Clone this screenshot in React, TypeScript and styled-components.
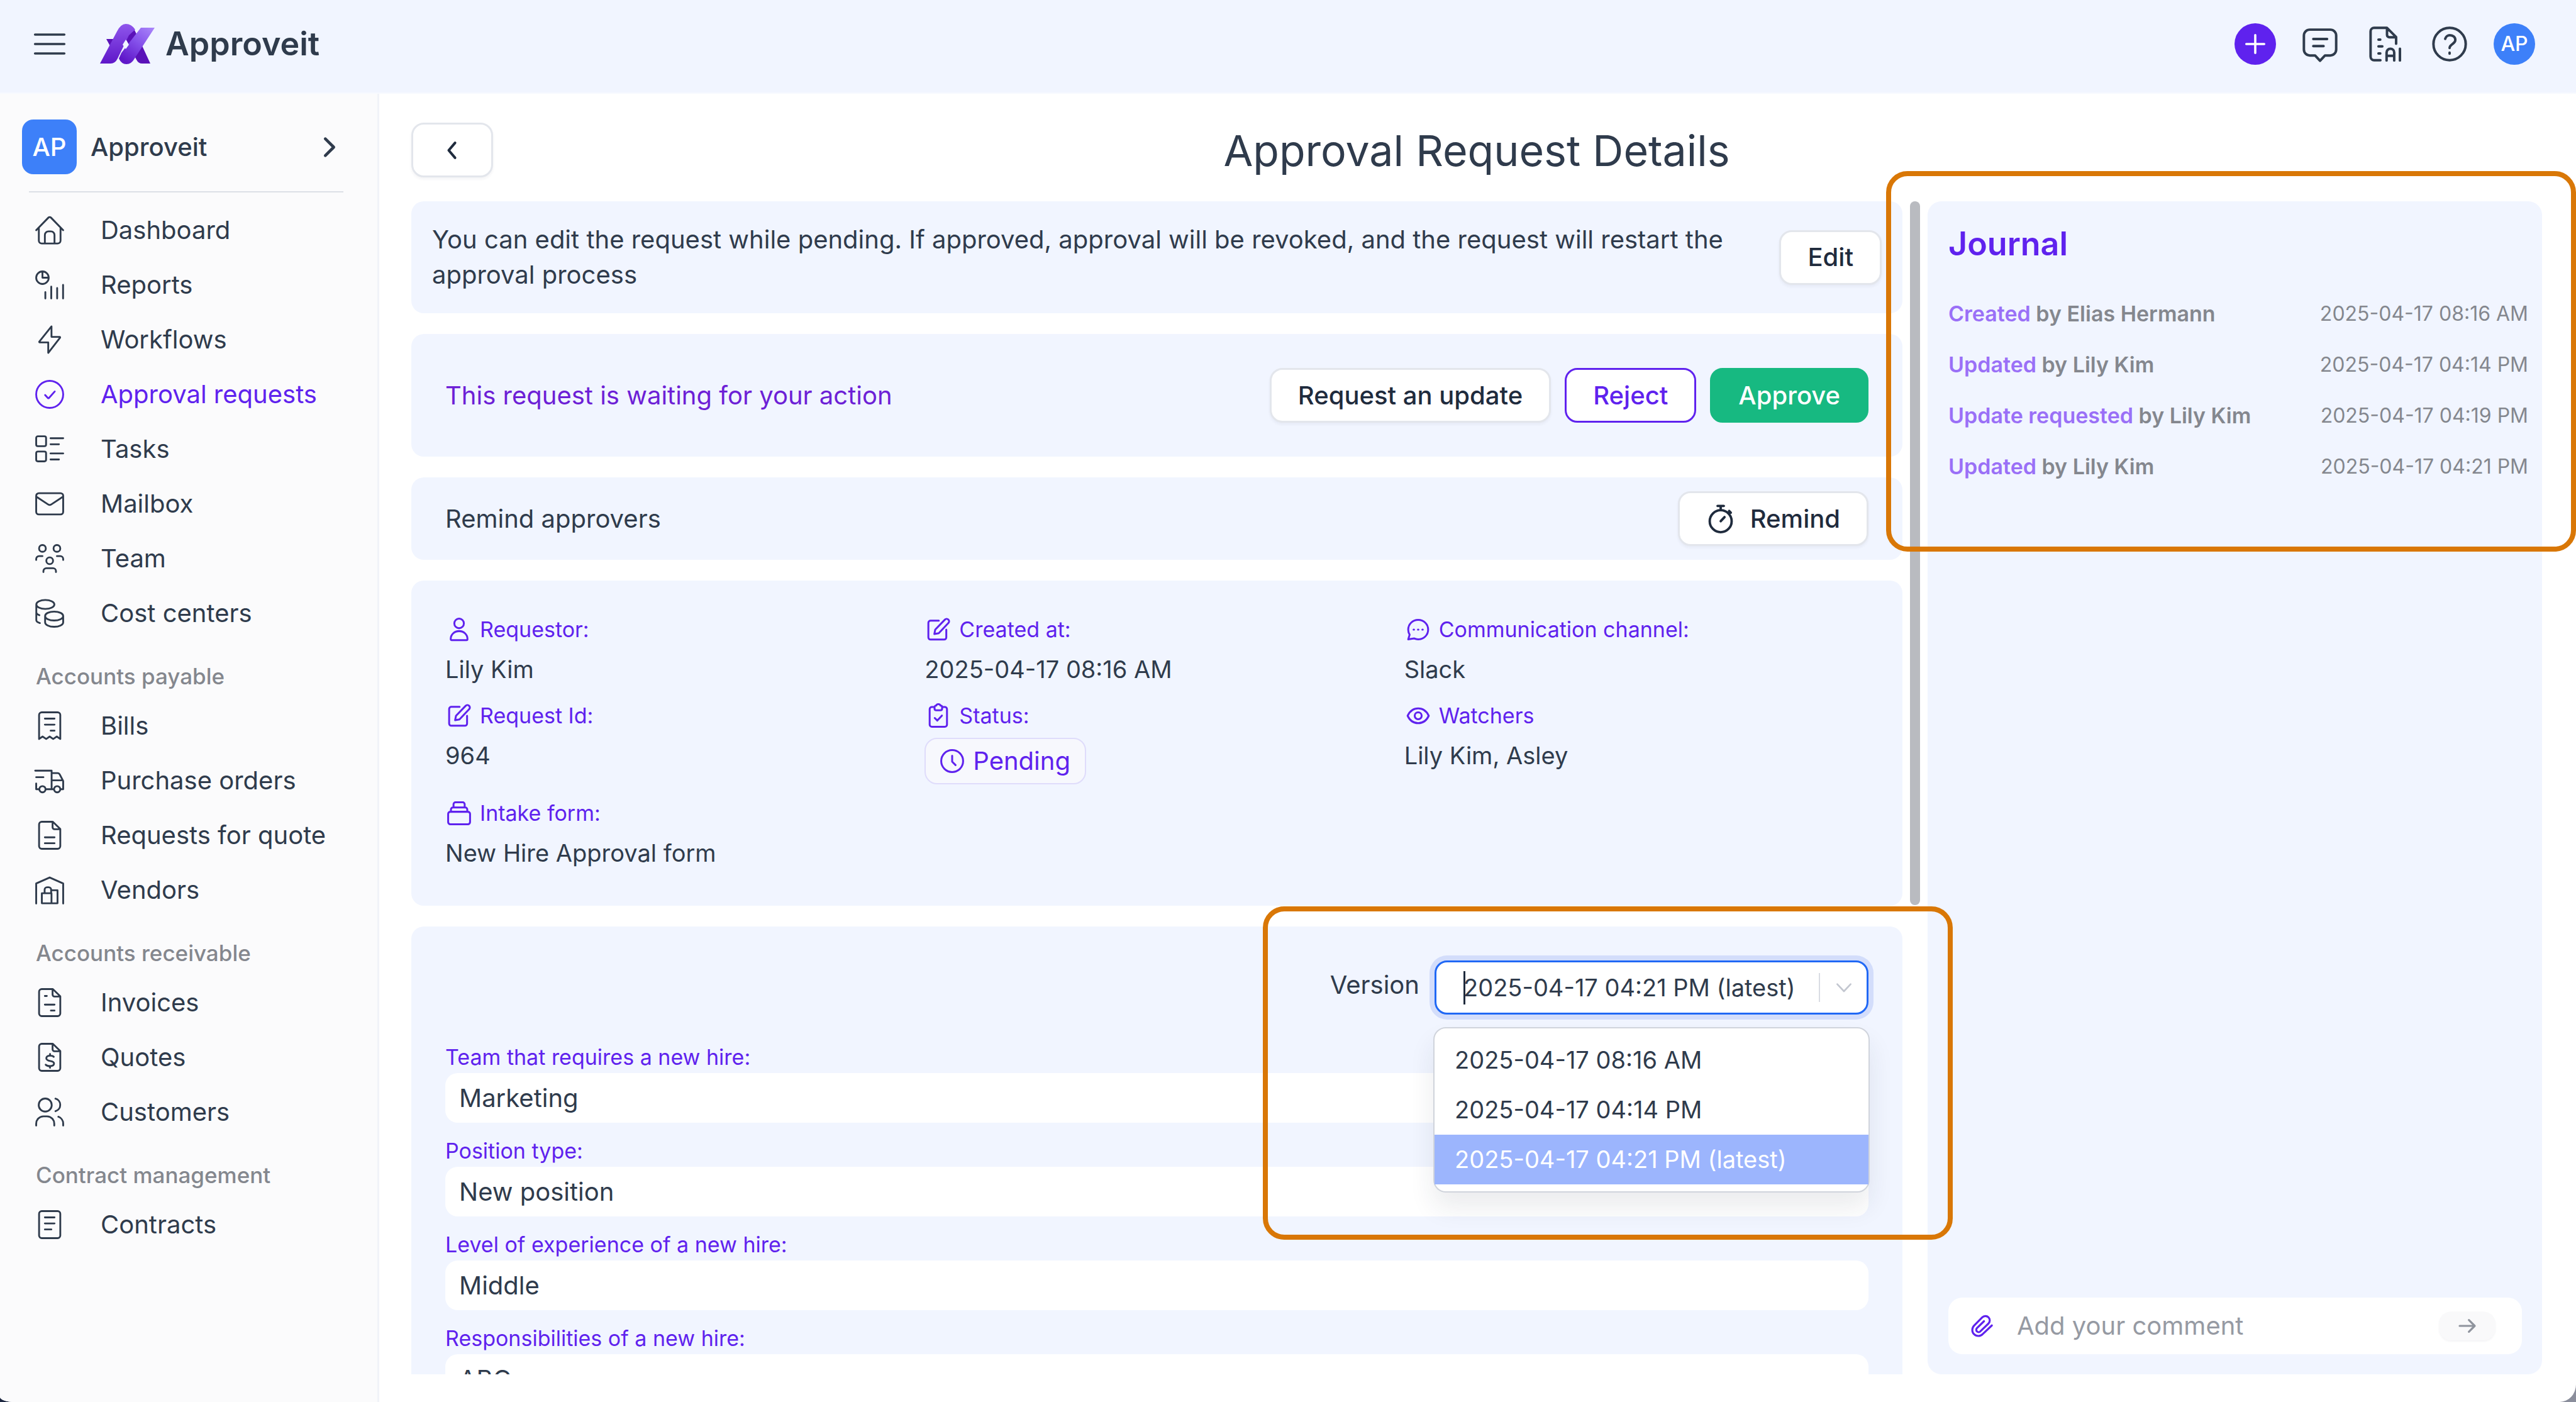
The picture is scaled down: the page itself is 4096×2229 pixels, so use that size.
import React from "react";
import styled, { createGlobalStyle, css } from "styled-components";

const color = {
  ink: "#2f3b4c",
  strong: "#1f2b3d",
  muted: "#84878e",
  purple: "#5f22ee",
  violet: "#6d1fd6",
  lilac: "#9a70f7",
  panel: "#f1f5ff",
  blue: "#3d80f9",
  green: "#17b981",
  orange: "#d97706",
};

const GlobalStyle = createGlobalStyle`
  *, *::before, *::after { box-sizing: border-box; }
  body {
    margin: 0;
    background: linear-gradient(to right, #1d2740 50%, #8b8e9c 50%);
    color: ${color.ink};
    font-family: Inter, "Noto Sans", sans-serif;
    font-optical-sizing: none;
    font-size: 40px;
    line-height: 56px;
  }
  button, input { font: inherit; color: inherit; }
  a { color: inherit; text-decoration: none; }
  h1, h2, h3, p, ul, dl, dd { margin: 0; padding: 0; }
  ul { list-style: none; }
`;

/* ---------- icons ---------- */

const FILE_OUTLINE =
  "M3.2 3A2.2 2.2 0 0 1 5.4.8h9.2l6.2 6V21a2.2 2.2 0 0 1-2.2 2.2H5.4A2.2 2.2 0 0 1 3.2 21ZM14.4 1v4.4A1.6 1.6 0 0 0 16 7h4.6";

const paths: Record<string, string> = {
  menu: "M.8 4.8h22.4M.8 12h22.4M.8 19.2h22.4",
  home: "M.8 12 11 1.5a1.4 1.4 0 0 1 2 0L23.2 12M3 10.2v10.4a2.4 2.4 0 0 0 2.4 2.4h13.2a2.4 2.4 0 0 0 2.4-2.4V10.2M8 23v-7a3 3 0 0 1 3-3h2a3 3 0 0 1 3 3v7",
  reports:
    "M6 .8a5.2 5.2 0 1 0 0 10.4A5.2 5.2 0 1 0 6 .8M6 .8V6h5.2M8.4 18v5.2M13.3 13.4v9.8M18.2 14.6v8.6M23.1 12v11.2",
  bolt: "M13.5 1 3.4 13.6c-.2.3 0 .7.3.7h7.1V23L20.6 10.4c.2-.3 0-.7-.3-.7h-6.8Z",
  approval: "M12 .8a11.2 11.2 0 1 0 0 22.4A11.2 11.2 0 1 0 12 .8M8.2 12.5l2.3 2.5a.6.6 0 0 0 .9 0L16.2 9.6",
  tasks:
    "M2.2 1.4h5.4A1.4 1.4 0 0 1 9 2.8v5.4a1.4 1.4 0 0 1-1.4 1.4H2.2A1.4 1.4 0 0 1 .8 8.2V2.8a1.4 1.4 0 0 1 1.4-1.4ZM2.2 14h5.4A1.4 1.4 0 0 1 9 15.4v5.4a1.4 1.4 0 0 1-1.4 1.4H2.2A1.4 1.4 0 0 1 .8 20.8v-5.4A1.4 1.4 0 0 1 2.2 14ZM12.7 3h10.5M12.7 8h7M12.7 15.6h10.5M12.7 20.6h7",
  mail: "M3 3.2h18A2.2 2.2 0 0 1 23.2 5.4v13.2A2.2 2.2 0 0 1 21 20.8H3A2.2 2.2 0 0 1 .8 18.6V5.4A2.2 2.2 0 0 1 3 3.2ZM1.4 6.4 11 12.7q1 .6 2 0l9.6-6.3",
  team: "M6 .8a2.8 2.8 0 1 0 0 5.6A2.8 2.8 0 1 0 6 .8M18 .8a2.8 2.8 0 1 0 0 5.6A2.8 2.8 0 1 0 18 .8M12 11a2.8 2.8 0 1 0 0 5.6A2.8 2.8 0 1 0 12 11M.8 13.2V12.4A2.4 2.4 0 0 1 3.2 10H6M23.2 13.2V12.4A2.4 2.4 0 0 0 20.8 10H18M6.8 23.2V22.4A2.4 2.4 0 0 1 9.2 20H14.8A2.4 2.4 0 0 1 17.2 22.4V23.2",
  coins:
    "M8.4 1c4.2 0 7.5 1.6 7.5 3.7S12.6 8.4 8.4 8.4.9 6.8.9 4.7 4.2 1 8.4 1ZM.9 4.7v13c0 .9 1 1.8 3 2.4M.9 11.2c0 .9 1 1.8 2.6 2.4M15.7 10.6c4.2 0 7.5 1.6 7.5 3.7S19.9 18 15.7 18s-7.5-1.6-7.5-3.7 3.3-3.7 7.5-3.7ZM8.2 14.3v5.2c0 2.1 3.3 3.7 7.5 3.7s7.5-1.6 7.5-3.7v-5.2",
  bill: "M3.2 22.9V3A2.2 2.2 0 0 1 5.4.8h13.2A2.2 2.2 0 0 1 20.8 3v19.9l-2.9-2-3 2-2.9-2-2.9 2-3-2-2.9 2ZM8 6h8M8 11h8M12.8 16H16",
  truck:
    "M0 3.8h13.6v15.4M13.6 5.8h4.9a2 2 0 0 1 1.8 1.1l2.9 5.5v6.8h-2.3M13.6 11.8h9.2M6 16.6a2.6 2.6 0 1 0 0 5.2 2.6 2.6 0 1 0 0-5.2M18.2 16.6a2.6 2.6 0 1 0 0 5.2 2.6 2.6 0 1 0 0-5.2M8.6 19.2h7M.8 14.4v4.8h2.6M.8 9.2h6",
  fileLines: FILE_OUTLINE + "M8 13.7h8M8 18.6h8",
  warehouse:
    "M.8 23.2V6.6L12 1.6l11.2 5v16.6M5.5 14.7h8v8.3h-8ZM13.5 12.2H18.5V23h-5M7.8 14.7v-3a2 2 0 0 1 2-2h1.4a2 2 0 0 1 2 2v3",
  fileBill: FILE_OUTLINE + "M8 6.5h1.6M8 13.7h8M13 18.6h3",
  fileDollar:
    FILE_OUTLINE +
    "M15.4 11.6c-.5-.6-1.5-1-3-1-1.8 0-3.2.7-3.2 2.2 0 3.2 6.4 1.4 6.4 4.3 0 1.5-1.5 2.2-3.4 2.2-1.6 0-2.9-.5-3.5-1.2M12.3 9.2v1.4M12.3 19.3v1.4",
  users:
    "M8.3.8a5.4 5.4 0 1 0 0 10.8A5.4 5.4 0 1 0 8.3.8M.8 23.2v-1.6a6 6 0 0 1 6-6h3a6 6 0 0 1 6 6v1.6M16.8.9a5.4 5.4 0 0 1 0 10.4M19.2 15.9a6 6 0 0 1 4 5.7v1.6",
  contract:
    "M5.4.8h13.2A2.2 2.2 0 0 1 20.8 3v18a2.2 2.2 0 0 1-2.2 2.2H5.4A2.2 2.2 0 0 1 3.2 21V3A2.2 2.2 0 0 1 5.4.8ZM8 6h8M8 11h8M8 16h5.4",
  chevronRight: "m9 5 7 7-7 7",
  chevronLeft: "m14.5 5.5-5.5 6.5 5.5 6.5",
  chevronDown: "m4 8 8 8.5L20 8",
  plus: "M12 2.5v19M2.5 12h19",
  comment:
    "M5 2.2h14a4 4 0 0 1 4 4v9.6a4 4 0 0 1-4 4h-3.6L12 23.4l-3.4-3.6H5a4 4 0 0 1-4-4V6.2a4 4 0 0 1 4-4ZM7.4 8.6h9.4M7.4 13.4h7",
  fileAi:
    "M9 23H4.7a2.4 2.4 0 0 1-2.4-2.4V3.4A2.4 2.4 0 0 1 4.7 1h8.8l6.2 6.2v4.6M13.5 1.2v4.6a1.6 1.6 0 0 0 1.6 1.6h4.4M7.7 9h1.2M7.7 13.6h2.6M7.7 18.4h1.2M13.2 23.2v-5.4a2.6 2.6 0 0 1 5.2 0v5.4M13.2 20h5.2M22.3 15.2v8",
  help: "M12 1a11 11 0 1 0 0 22A11 11 0 1 0 12 1M9 8.5A3.3 3.3 0 0 1 12.3 6c2 0 3.6 1.3 3.6 3.2 0 2.8-3.9 2.8-3.9 5.5M12 17.9v.6",
  person:
    "M12 1a4.8 4.8 0 1 0 0 9.6A4.8 4.8 0 1 0 12 1M3.6 21.4c0-4.4 3.6-7.9 8.4-7.9s8.4 3.5 8.4 7.9c0 .8-.3 1.2-1 1.2H4.6c-.7 0-1-.4-1-1.2Z",
  edit: "M12.5 3H4.2A2.2 2.2 0 0 0 2 5.2v14.6A2.2 2.2 0 0 0 4.2 22h13.6a2.2 2.2 0 0 0 2.2-2.2V12M18.6 2a2.4 2.4 0 0 1 3.5 3.4L12.4 15.6 8 16.4l.9-4.4Z",
  clipboard:
    "M8.2 3.2H5.5a2.2 2.2 0 0 0-2.2 2.2V20.8A2.2 2.2 0 0 0 5.5 23h13a2.2 2.2 0 0 0 2.2-2.2V5.4a2.2 2.2 0 0 0-2.2-2.2h-2.7M8.2 3.4A1.6 1.6 0 0 1 9.8 1.8 2.4 2.4 0 0 1 14.2 1.8 1.6 1.6 0 0 1 15.8 3.4V5A1.6 1.6 0 0 1 14.2 6.5H9.8A1.6 1.6 0 0 1 8.2 5ZM8.4 14.2l2.6 2.6 4.6-5",
  clock: "M12 1a11 11 0 1 0 0 22A11 11 0 1 0 12 1M12 6.6v6l3.4 3.4",
  chat: "M12 2.2c5.6 0 10 4.3 10 9.8s-4.4 9.8-10 9.8c-1.6 0-3-.4-4.2-1L2 21.8l1.4-4.7A9.4 9.4 0 0 1 2 12C2 6.5 6.4 2.2 12 2.2ZM7.4 12h.4M11.8 12h.4M16.2 12h.4",
  eye: "M1.4 12C3.6 7.2 7.5 4.6 12 4.6S20.4 7.2 22.6 12C20.4 16.8 16.5 19.4 12 19.4S3.6 16.8 1.4 12ZM12 8.5a3.5 3.5 0 1 0 0 7 3.5 3.5 0 1 0 0-7",
  stack:
    "M3.2 10.5h17.6A2.2 2.2 0 0 1 23 12.7v8A2.2 2.2 0 0 1 20.8 23H3.2A2.2 2.2 0 0 1 1 20.7v-8A2.2 2.2 0 0 1 3.2 10.5ZM3.8 10.3V8.2A2 2 0 0 1 5.8 6.2h12.4a2 2 0 0 1 2 2v2.1M6.4 6V3a2 2 0 0 1 2-2h7.2a2 2 0 0 1 2 2v3",
  clip: "m22.8 11.5-9.8 9.2a6.3 6.3 0 0 1-9.1.1 6.5 6.5 0 0 1 0-9.1L12.6 2.9a4.7 4.7 0 0 1 6.6 0 4.7 4.7 0 0 1 0 6.6l-8.6 8.3a2.5 2.5 0 0 1-3.7-3.4l7.6-7.4",
  stopwatch:
    "M12 4.8a9.1 9.1 0 1 0 0 18.2 9.1 9.1 0 1 0 0-18.2M9.4 1.2h5.2M12 1.4v3.2M19 5.4l1.4 1.4M12 13.9l3.2-3.4",
  arrow: "M3 12h18M14 5l7 7-7 7",
};

const Svg = styled.svg<{ $size: number }>`
  display: block;
  flex: none;
  width: ${(p) => p.$size}px;
  height: ${(p) => p.$size}px;
  overflow: visible;
  fill: none;
  stroke: currentColor;
  stroke-linecap: round;
  stroke-linejoin: round;
`;

function Icon({ name, size = 46, stroke = 1.5 }: { name: string; size?: number; stroke?: number }) {
  return (
    <Svg $size={size} viewBox="0 0 24 24" strokeWidth={stroke} aria-hidden="true">
      <path d={paths[name]} />
    </Svg>
  );
}

const LogoSvg = styled.svg`
  display: block;
  width: 88px;
  height: 64px;
`;

function Logo() {
  return (
    <LogoSvg viewBox="0 0 88 64" aria-hidden="true">
      <defs>
        <linearGradient id="leg" x1="0" y1="0" x2="0" y2="1">
          <stop offset="0" stopColor="#8f56ec" />
          <stop offset="1" stopColor="#5f17c9" />
        </linearGradient>
        <linearGradient id="arm" x1="1" y1="0" x2="0.3" y2="1">
          <stop offset="0" stopColor="#ab88fb" />
          <stop offset="0.5" stopColor="#8450ea" />
          <stop offset="1" stopColor="#5f17c9" />
        </linearGradient>
      </defs>
      <path d="M10 24H22L16 35Z" fill="#5a12b8" />
      <path d="M44 8H54L62 24 80 63H67Q61 63 58 57L40 22Z" fill="#5a12b8" />
      <path d="M0 63 27 12Q33 0 41 0 50 0 56 9L46 18 28 55Q24 63 17 63Z" fill="url(#leg)" />
      <path d="M65 6H87L55 55Q50 64 42 64 34 64 30 55L34 46Z" fill="url(#arm)" />
      <path d="M41 25 46 33 41 40 36 33Z" fill="#f1f5ff" />
    </LogoSvg>
  );
}

/* ---------- shell ---------- */

const Page = styled.div`
  position: relative;
  display: flex;
  flex-direction: column;
  height: 100vh;
  overflow: hidden;
  background: #fff;
  border-radius: 0 0 26px 24px / 0 0 28px 8px;
`;

const Header = styled.header`
  display: flex;
  align-items: center;
  justify-content: space-between;
  flex: none;
  padding: 37px 65px 44px 54px;
  background: ${color.panel};
  border-bottom: 2px solid #f7f9ff;
`;

const Brand = styled.div`
  display: flex;
  align-items: center;
  gap: 55px;
`;

const BrandLink = styled.a`
  display: flex;
  align-items: center;
  gap: 16px;
  font-size: 52px;
  font-weight: 600;
`;

const Tools = styled.div`
  display: flex;
  align-items: center;
  gap: 37px;
`;

const ToolButton = styled.button<{ $fill?: string }>`
  display: grid;
  place-items: center;
  width: 66px;
  height: 66px;
  padding: 0;
  border: 0;
  border-radius: 50%;
  background: ${(p) => p.$fill ?? "transparent"};
  color: ${(p) => (p.$fill ? "#fff" : color.ink)};
  font-size: 32px;
  font-weight: 500;
`;

const MenuButton = styled(ToolButton)`
  width: 50px;
`;

const Body = styled.div`
  display: grid;
  grid-template-columns: 603px minmax(0, 1fr);
  flex: 1;
  min-height: 0;
`;

/* ---------- sidebar ---------- */

const Sidebar = styled.nav`
  padding: 41px 54px 0 35px;
  background: #fbfbfc;
  border-right: 3px solid #f1f3f8;
`;

const Workspace = styled.button`
  display: flex;
  align-items: center;
  width: 100%;
  gap: 22px;
  padding: 0;
  border: 0;
  background: none;
  font-weight: 500;
`;

const WorkspaceName = styled.span`
  flex: 1;
  text-align: left;
`;

const WorkspaceBadge = styled.span`
  display: grid;
  place-items: center;
  width: 87px;
  height: 87px;
  border-radius: 18px;
  background: ${color.blue};
  color: #fff;
`;

const Rule = styled.hr`
  height: 2px;
  margin: 27px 0 16px 11px;
  border: 0;
  background: #dce0e6;
`;

const NavHeading = styled.h3`
  padding: 34px 0 12px 22px;
  color: ${color.muted};
  font-size: 35px;
  font-weight: 500;
  line-height: 46px;
`;

const NavLink = styled.a<{ $active?: boolean }>`
  display: flex;
  align-items: center;
  gap: 58px;
  height: 87px;
  padding-left: 21px;
  white-space: nowrap;
  color: ${(p) => (p.$active ? color.purple : color.ink)};
`;

/* ---------- main ---------- */

const Main = styled.main`
  display: flex;
  flex-direction: column;
  min-height: 0;
  padding: 46px 54px 44px 51px;
`;

const TitleBar = styled.div`
  display: grid;
  grid-template-columns: 1fr auto 1fr;
  align-items: center;
  margin-bottom: 38px;
`;

const Title = styled.h1`
  font-size: 68px;
  font-weight: 400;
  line-height: 80px;
`;

const buttonLook = {
  plain: css`
    border-color: #e3e6ec;
    background: #fff;
    color: ${color.strong};
    box-shadow: 0 3px 4px rgba(30, 40, 70, 0.05);
  `,
  outline: css`
    border-color: ${color.purple};
    background: #fff;
    color: ${color.purple};
  `,
  solid: css`
    border-color: ${color.green};
    background: ${color.green};
    color: #fff;
  `,
};

const Button = styled.button<{ $look?: keyof typeof buttonLook }>`
  display: flex;
  align-items: center;
  justify-content: center;
  gap: 24px;
  flex: none;
  height: 87px;
  padding: 0 42px;
  border: 3px solid;
  border-radius: 20px;
  font-weight: 500;
  white-space: nowrap;
  ${(p) => buttonLook[p.$look ?? "plain"]}
`;

const BackButton = styled(Button)`
  width: 130px;
  padding: 0;
`;

const Columns = styled.div`
  display: grid;
  grid-template-columns: minmax(0, 1fr) 16px 977px;
  column-gap: 12px;
  flex: 1;
  min-height: 0;
`;

const Scroller = styled.div`
  display: flex;
  flex-direction: column;
  gap: 33px;
  min-height: 0;
  overflow: hidden;
`;

const ScrollThumb = styled.div`
  height: 60%;
  border-radius: 8px;
  background: #b9bbc0;
`;

const Card = styled.section<{ $pad: string }>`
  flex: none;
  padding: ${(p) => p.$pad};
  border-radius: 20px;
  background: ${color.panel};
`;

const CardRow = styled(Card)`
  display: flex;
  align-items: center;
  justify-content: space-between;
  gap: 22px;
`;

const Notice = styled.p`
  max-width: 2120px;
`;

const Waiting = styled.p`
  color: ${color.violet};
`;

const Actions = styled.div`
  display: flex;
  gap: 22px;
`;

const Facts = styled.dl`
  display: grid;
  grid-template-columns: repeat(3, minmax(0, 1fr));
  gap: 20px 24px;
`;

const Fact = styled.div`
  display: flex;
  flex-direction: column;
  align-items: flex-start;
  gap: 9px;
`;

const FactLabel = styled.dt`
  display: flex;
  align-items: center;
  gap: 14px;
  padding-left: 3px;
  color: ${color.purple};
  font-size: 34px;
  line-height: 52px;
`;

const FactValue = styled.dd`
  font-size: 38px;
`;

const Badge = styled.span`
  display: flex;
  align-items: center;
  gap: 14px;
  height: 74px;
  padding: 0 23px;
  border: 2px solid #dfdcfb;
  border-radius: 20px;
  background: #f7f8fd;
  color: ${color.purple};
  font-size: 40px;
`;

const VersionRow = styled.div`
  display: flex;
  justify-content: flex-end;
  gap: 24px;
  margin-bottom: 45px;
`;

const VersionLabel = styled.label`
  line-height: 78px;
`;

const Combo = styled.div`
  position: relative;
  display: flex;
  align-items: center;
  width: 690px;
  height: 86px;
  padding: 0 20px 0 43px;
  border: 3px solid #2068f5;
  border-radius: 20px;
  background: #fff;
  box-shadow: 0 0 0 8px #d3ddfb;
  font-size: 38px;
`;

const ComboInput = styled.input`
  flex: 1;
  min-width: 0;
  padding: 0;
  border: 0;
  outline: 0;
  background: none;
`;

const Caret = styled.span`
  position: absolute;
  left: 43px;
  width: 3px;
  height: 53px;
  background: ${color.strong};
`;

const ComboToggle = styled.button`
  display: flex;
  align-items: center;
  height: 46px;
  padding: 0 0 0 22px;
  border: 0;
  border-left: 2px solid #d9dce3;
  background: none;
  color: #c3c7d0;
`;

const Menu = styled.ul`
  position: absolute;
  z-index: 1;
  top: 103px;
  left: -5px;
  right: -5px;
  padding: 11px 0;
  border: 2px solid #d0d4dc;
  border-radius: 20px;
  background: #fff;
  box-shadow: 0 24px 40px rgba(30, 40, 70, 0.09);
`;

const Option = styled.li<{ $selected: boolean }>`
  padding: 0 32px;
  line-height: 79px;
  background: ${(p) => (p.$selected ? "#9cb5fd" : "transparent")};
  color: ${(p) => (p.$selected ? "#fff" : "inherit")};
`;

const Field = styled.div`
  display: flex;
  flex-direction: column;
  gap: 2px;
  margin-bottom: 22px;
`;

const FieldLabel = styled.label`
  color: ${color.purple};
  font-size: 34px;
  line-height: 46px;
`;

const FieldInput = styled.input`
  height: 79px;
  padding: 0 22px;
  border: 0;
  border-radius: 20px;
  background: #fff;
`;

/* ---------- journal ---------- */

const Journal = styled.aside`
  display: flex;
  flex-direction: column;
  padding: 38px 22px 32px 33px;
  border-radius: 22px;
  background: ${color.panel};
`;

const JournalTitle = styled.h2`
  margin-bottom: 40px;
  color: ${color.purple};
  font-size: 52px;
  font-weight: 600;
  line-height: 60px;
`;

const Entries = styled.ul`
  display: flex;
  flex-direction: column;
  flex: 1;
`;

const Entry = styled.li`
  display: flex;
  justify-content: space-between;
  color: ${color.muted};
  font-size: 34px;
  line-height: 81px;
`;

const Who = styled.span`
  font-weight: 600;
`;

const Verb = styled.span`
  color: ${color.lilac};
`;

const When = styled.time`
  font-size: 32px;
`;

const CommentBox = styled.form`
  display: flex;
  align-items: center;
  gap: 38px;
  height: 90px;
  margin-right: 10px;
  padding: 0 42px 0 35px;
  border-radius: 22px;
  background: #fff;
`;

const Attach = styled.button`
  padding: 0;
  border: 0;
  background: none;
  color: ${color.purple};
`;

const CommentInput = styled.input`
  flex: 1;
  min-width: 0;
  padding: 0;
  border: 0;
  background: none;
  &::placeholder {
    color: #969aa3;
    opacity: 1;
  }
`;

const Send = styled.button`
  display: grid;
  place-items: center;
  width: 90px;
  height: 46px;
  padding: 0;
  border: 0;
  border-radius: 20px;
  background: #f9f9fa;
  color: #8f949d;
  box-shadow: 0 2px 3px rgba(30, 40, 70, 0.05);
`;

const Highlight = styled.div<{ $top: number; $right: number; $height: number }>`
  position: absolute;
  z-index: 2;
  top: ${(p) => p.$top}px;
  right: ${(p) => p.$right}px;
  width: 1097px;
  height: ${(p) => p.$height}px;
  border: 8px solid ${color.orange};
  border-radius: 34px;
  pointer-events: none;
`;

/* ---------- data ---------- */

const nav = [
  {
    items: [
      ["home", "Dashboard"],
      ["reports", "Reports"],
      ["bolt", "Workflows"],
      ["approval", "Approval requests"],
      ["tasks", "Tasks"],
      ["mail", "Mailbox"],
      ["team", "Team"],
      ["coins", "Cost centers"],
    ],
  },
  {
    heading: "Accounts payable",
    items: [
      ["bill", "Bills"],
      ["truck", "Purchase orders"],
      ["fileLines", "Requests for quote"],
      ["warehouse", "Vendors"],
    ],
  },
  {
    heading: "Accounts receivable",
    items: [
      ["fileBill", "Invoices"],
      ["fileDollar", "Quotes"],
      ["users", "Customers"],
    ],
  },
  { heading: "Contract management", items: [["contract", "Contracts"]] },
];

const facts: [string, string, string][] = [
  ["person", "Requestor:", "Lily Kim"],
  ["edit", "Created at:", "2025-04-17 08:16 AM"],
  ["chat", "Communication channel:", "Slack"],
  ["edit", "Request Id:", "964"],
  ["clipboard", "Status:", "Pending"],
  ["eye", "Watchers", "Lily Kim, Asley"],
  ["stack", "Intake form:", "New Hire Approval form"],
];

const versions = ["2025-04-17 08:16 AM", "2025-04-17 04:14 PM", "2025-04-17 04:21 PM (latest)"];

const fields = [
  ["team", "Team that requires a new hire:", "Marketing"],
  ["position", "Position type:", "New position"],
  ["level", "Level of experience of a new hire:", "Middle"],
  ["duties", "Responsibilities of a new hire:", "ABC"],
];

const entries = [
  ["Created", "Elias Hermann", "2025-04-17 08:16 AM"],
  ["Updated", "Lily Kim", "2025-04-17 04:14 PM"],
  ["Update requested", "Lily Kim", "2025-04-17 04:19 PM"],
  ["Updated", "Lily Kim", "2025-04-17 04:21 PM"],
];

export default function App() {
  return (
    <>
      <GlobalStyle />
      <Page>
        <Header>
          <Brand>
            <MenuButton aria-label="Menu">
              <Icon name="menu" size={50} stroke={1.7} />
            </MenuButton>
            <BrandLink href="#">
              <Logo />
              Approveit
            </BrandLink>
          </Brand>
          <Tools>
            <ToolButton $fill={color.purple} aria-label="New">
              <Icon name="plus" size={36} stroke={2.4} />
            </ToolButton>
            <ToolButton aria-label="Messages">
              <Icon name="comment" size={56} stroke={1.7} />
            </ToolButton>
            <ToolButton aria-label="AI documents">
              <Icon name="fileAi" size={56} stroke={1.7} />
            </ToolButton>
            <ToolButton aria-label="Help">
              <Icon name="help" size={56} stroke={1.7} />
            </ToolButton>
            <ToolButton $fill={color.blue}>AP</ToolButton>
          </Tools>
        </Header>

        <Body>
          <Sidebar>
            <Workspace>
              <WorkspaceBadge>AP</WorkspaceBadge>
              <WorkspaceName>Approveit</WorkspaceName>
              <Icon name="chevronRight" size={46} stroke={2.4} />
            </Workspace>
            <Rule />
            {nav.map((group, i) => (
              <React.Fragment key={i}>
                {group.heading && <NavHeading>{group.heading}</NavHeading>}
                {group.items.map(([icon, label]) => (
                  <NavLink key={label} href="#" $active={icon === "approval"}>
                    <Icon name={icon} />
                    {label}
                  </NavLink>
                ))}
              </React.Fragment>
            ))}
          </Sidebar>

          <Main>
            <TitleBar>
              <BackButton aria-label="Back">
                <Icon name="chevronLeft" size={44} stroke={2.2} />
              </BackButton>
              <Title>Approval Request Details</Title>
            </TitleBar>

            <Columns>
              <Scroller>
                <CardRow $pad="33px">
                  <Notice>
                    You can edit the request while pending. If approved, approval will be revoked, and the request will
                    restart the approval process
                  </Notice>
                  <Button>Edit</Button>
                </CardRow>

                <CardRow $pad="54px">
                  <Waiting>This request is waiting for your action</Waiting>
                  <Actions>
                    <Button>Request an update</Button>
                    <Button $look="outline">Reject</Button>
                    <Button $look="solid">Approve</Button>
                  </Actions>
                </CardRow>

                <CardRow $pad="22px 54px">
                  <p>Remind approvers</p>
                  <Button>
                    <Icon name="stopwatch" size={46} stroke={2} />
                    Remind
                  </Button>
                </CardRow>

                <Card $pad="52px 54px 56px">
                  <Facts>
                    {facts.map(([icon, label, value]) => (
                      <Fact key={label}>
                        <FactLabel>
                          <Icon name={icon} size={38} stroke={1.9} />
                          {label}
                        </FactLabel>
                        <FactValue>
                          {icon === "clipboard" ? (
                            <Badge>
                              <Icon name="clock" size={38} stroke={1.9} />
                              {value}
                            </Badge>
                          ) : (
                            value
                          )}
                        </FactValue>
                      </Fact>
                    ))}
                  </Facts>
                </Card>

                <Card $pad="54px">
                  <VersionRow>
                    <VersionLabel htmlFor="version">Version</VersionLabel>
                    <Combo>
                      <Caret />
                      <ComboInput
                        id="version"
                        role="combobox"
                        aria-expanded="true"
                        aria-controls="version-list"
                        readOnly
                        value={versions[2]}
                      />
                      <ComboToggle aria-label="Toggle versions">
                        <Icon name="chevronDown" size={32} stroke={2} />
                      </ComboToggle>
                      <Menu id="version-list" role="listbox">
                        {versions.map((v, i) => (
                          <Option key={v} role="option" aria-selected={i === 2} $selected={i === 2}>
                            {v}
                          </Option>
                        ))}
                      </Menu>
                    </Combo>
                  </VersionRow>
                  {fields.map(([id, label, value]) => (
                    <Field key={id}>
                      <FieldLabel htmlFor={id}>{label}</FieldLabel>
                      <FieldInput id={id} readOnly value={value} />
                    </Field>
                  ))}
                </Card>
              </Scroller>

              <ScrollThumb />

              <Journal>
                <JournalTitle>Journal</JournalTitle>
                <Entries>
                  {entries.map(([verb, who, when]) => (
                    <Entry key={when}>
                      <Who>
                        <Verb>{verb}</Verb> by {who}
                      </Who>
                      <When>{when}</When>
                    </Entry>
                  ))}
                </Entries>
                <CommentBox>
                  <Attach type="button" aria-label="Attach a file">
                    <Icon name="clip" size={36} stroke={2.1} />
                  </Attach>
                  <CommentInput aria-label="Comment" placeholder="Add your comment" />
                  <Send aria-label="Send">
                    <Icon name="arrow" size={32} stroke={2.4} />
                  </Send>
                </CommentBox>
              </Journal>
            </Columns>
          </Main>
        </Body>

        <Highlight $top={272} $right={0} $height={605} />
        <Highlight $top={1441} $right={991} $height={530} />
      </Page>
    </>
  );
}
